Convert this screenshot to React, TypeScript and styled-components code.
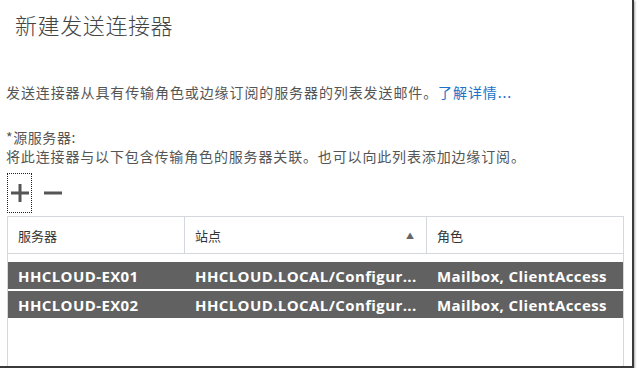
import styled, { createGlobalStyle } from 'styled-components';

const GlobalStyle = createGlobalStyle`
	html, body {
		margin: 0;
		padding: 0;
		background: #ffffff;
	}
	body {
		font-family: 'Noto Sans CJK SC', 'Noto Sans', sans-serif;
	}
`;

type Server = {
	name: string;
	site: string;
	role: string;
};

const servers: Server[] = [
	{ name: 'HHCLOUD-EX01', site: 'HHCLOUD.LOCAL/Configur...', role: 'Mailbox, ClientAccess' },
	{ name: 'HHCLOUD-EX02', site: 'HHCLOUD.LOCAL/Configur...', role: 'Mailbox, ClientAccess' },
];

const columns = [
	{ title: '服务器', width: 177, sorted: false },
	{ title: '站点', width: 242, sorted: true },
	{ title: '角色', width: 196, sorted: false },
];

export default function App(): JSX.Element {
	return (
		<>
			<GlobalStyle />
			<Window>
				<Title>新建发送连接器</Title>
				<Description>
					发送连接器从具有传输角色或边缘订阅的服务器的列表发送邮件。
					<Link href='#'>了解详情...</Link>
				</Description>
				<Label>*源服务器:</Label>
				<Hint>将此连接器与以下包含传输角色的服务器关联。也可以向此列表添加边缘订阅。</Hint>
				<Toolbar>
					<IconButton $focused aria-label='添加'>
						<svg width='20' height='20' viewBox='0 0 20 20'>
							<path d='M10 1v18M1 10h18' stroke='#555' strokeWidth='3' />
						</svg>
					</IconButton>
					<IconButton aria-label='删除'>
						<svg width='20' height='20' viewBox='0 0 20 20'>
							<path d='M1 10h18' stroke='#555' strokeWidth='3' />
						</svg>
					</IconButton>
				</Toolbar>
				<Table>
					<HeaderRow>
						{columns.map((col, i) => (
							<HeaderCell key={col.title} $width={col.width} $last={i === columns.length - 1}>
								<span>{col.title}</span>
								{col.sorted && <SortArrow>▲</SortArrow>}
							</HeaderCell>
						))}
					</HeaderRow>
					<Rows>
						{servers.map((s) => (
							<DataRow key={s.name}>
								<DataCell $width={177}>{s.name}</DataCell>
								<DataCell $width={242}>{s.site}</DataCell>
								<DataCell $width={196}>{s.role}</DataCell>
							</DataRow>
						))}
					</Rows>
				</Table>
			</Window>
		</>
	);
}

const Window = styled.div`
	width: 632px;
	height: 366px;
	background: #ffffff;
	border-right: 2px solid #3a3a3a;
	border-bottom: 2px solid #3a3a3a;
	box-shadow: 1px 1px 2px rgba(0, 0, 0, 0.35);
	overflow: hidden;
	display: flex;
	flex-direction: column;
`;

const Title = styled.h1`
	margin: 0;
	padding: 10px 0 0 15px;
	font-size: 22px;
	line-height: 28px;
	font-weight: 300;
	color: #444444;
	letter-spacing: 0.6px;
`;

const Description = styled.p`
	margin: 44px 0 0 6px;
	font-size: 14px;
	line-height: 20px;
	color: #555555;
	letter-spacing: 0.9px;
	white-space: nowrap;
`;

const Link = styled.a`
	color: #1a73c8;
	text-decoration: none;
`;

const Label = styled.div`
	margin: 26px 0 0 6px;
	font-size: 14px;
	line-height: 19px;
	color: #555555;
	letter-spacing: 0.6px;
`;

const Hint = styled.div`
	margin-left: 6px;
	font-size: 14px;
	line-height: 19px;
	color: #555555;
	letter-spacing: 0.85px;
	white-space: nowrap;
`;

const Toolbar = styled.div`
	display: flex;
	align-items: center;
	gap: 8px;
	margin: 7px 0 0 7px;
	height: 40px;
`;

const IconButton = styled.button<{ $focused?: boolean }>`
	width: 25px;
	height: 40px;
	padding: 0;
	margin: 0;
	display: flex;
	align-items: center;
	justify-content: center;
	background: transparent;
	border: 1px dotted ${(p) => (p.$focused ? '#222222' : 'transparent')};
	cursor: pointer;
`;

const Table = styled.div`
	margin: 3px 0 0 7px;
	width: 615px;
	flex: 1;
	border-left: 1px solid #d4d8dc;
	border-right: 1px solid #d4d8dc;
`;

const HeaderRow = styled.div`
	display: flex;
	height: 36px;
	border-top: 1px solid #d4d8dc;
	border-bottom: 1px solid #d4d8dc;
`;

const HeaderCell = styled.div<{ $width: number; $last?: boolean }>`
	width: ${(p) => p.$width}px;
	box-sizing: border-box;
	display: flex;
	align-items: center;
	justify-content: space-between;
	padding: 0 12px 0 10px;
	border-right: ${(p) => (p.$last ? 'none' : '1px solid #d4d8dc')};
	font-size: 13px;
	color: #333333;
`;

const SortArrow = styled.span`
	font-size: 8px;
	color: #666666;
`;

const Rows = styled.div`
	margin-top: 8px;
	display: flex;
	flex-direction: column;
	gap: 2px;
`;

const DataRow = styled.div`
	display: flex;
	height: 27px;
	background: #616161;
`;

const DataCell = styled.div<{ $width: number }>`
	width: ${(p) => p.$width}px;
	box-sizing: border-box;
	padding-left: 10px;
	display: flex;
	align-items: center;
	font-family: 'Open Sans', 'Noto Sans', sans-serif;
	font-weight: 700;
	font-size: 15px;
	letter-spacing: 0.4px;
	color: #ffffff;
	white-space: nowrap;
	overflow: hidden;
`;
